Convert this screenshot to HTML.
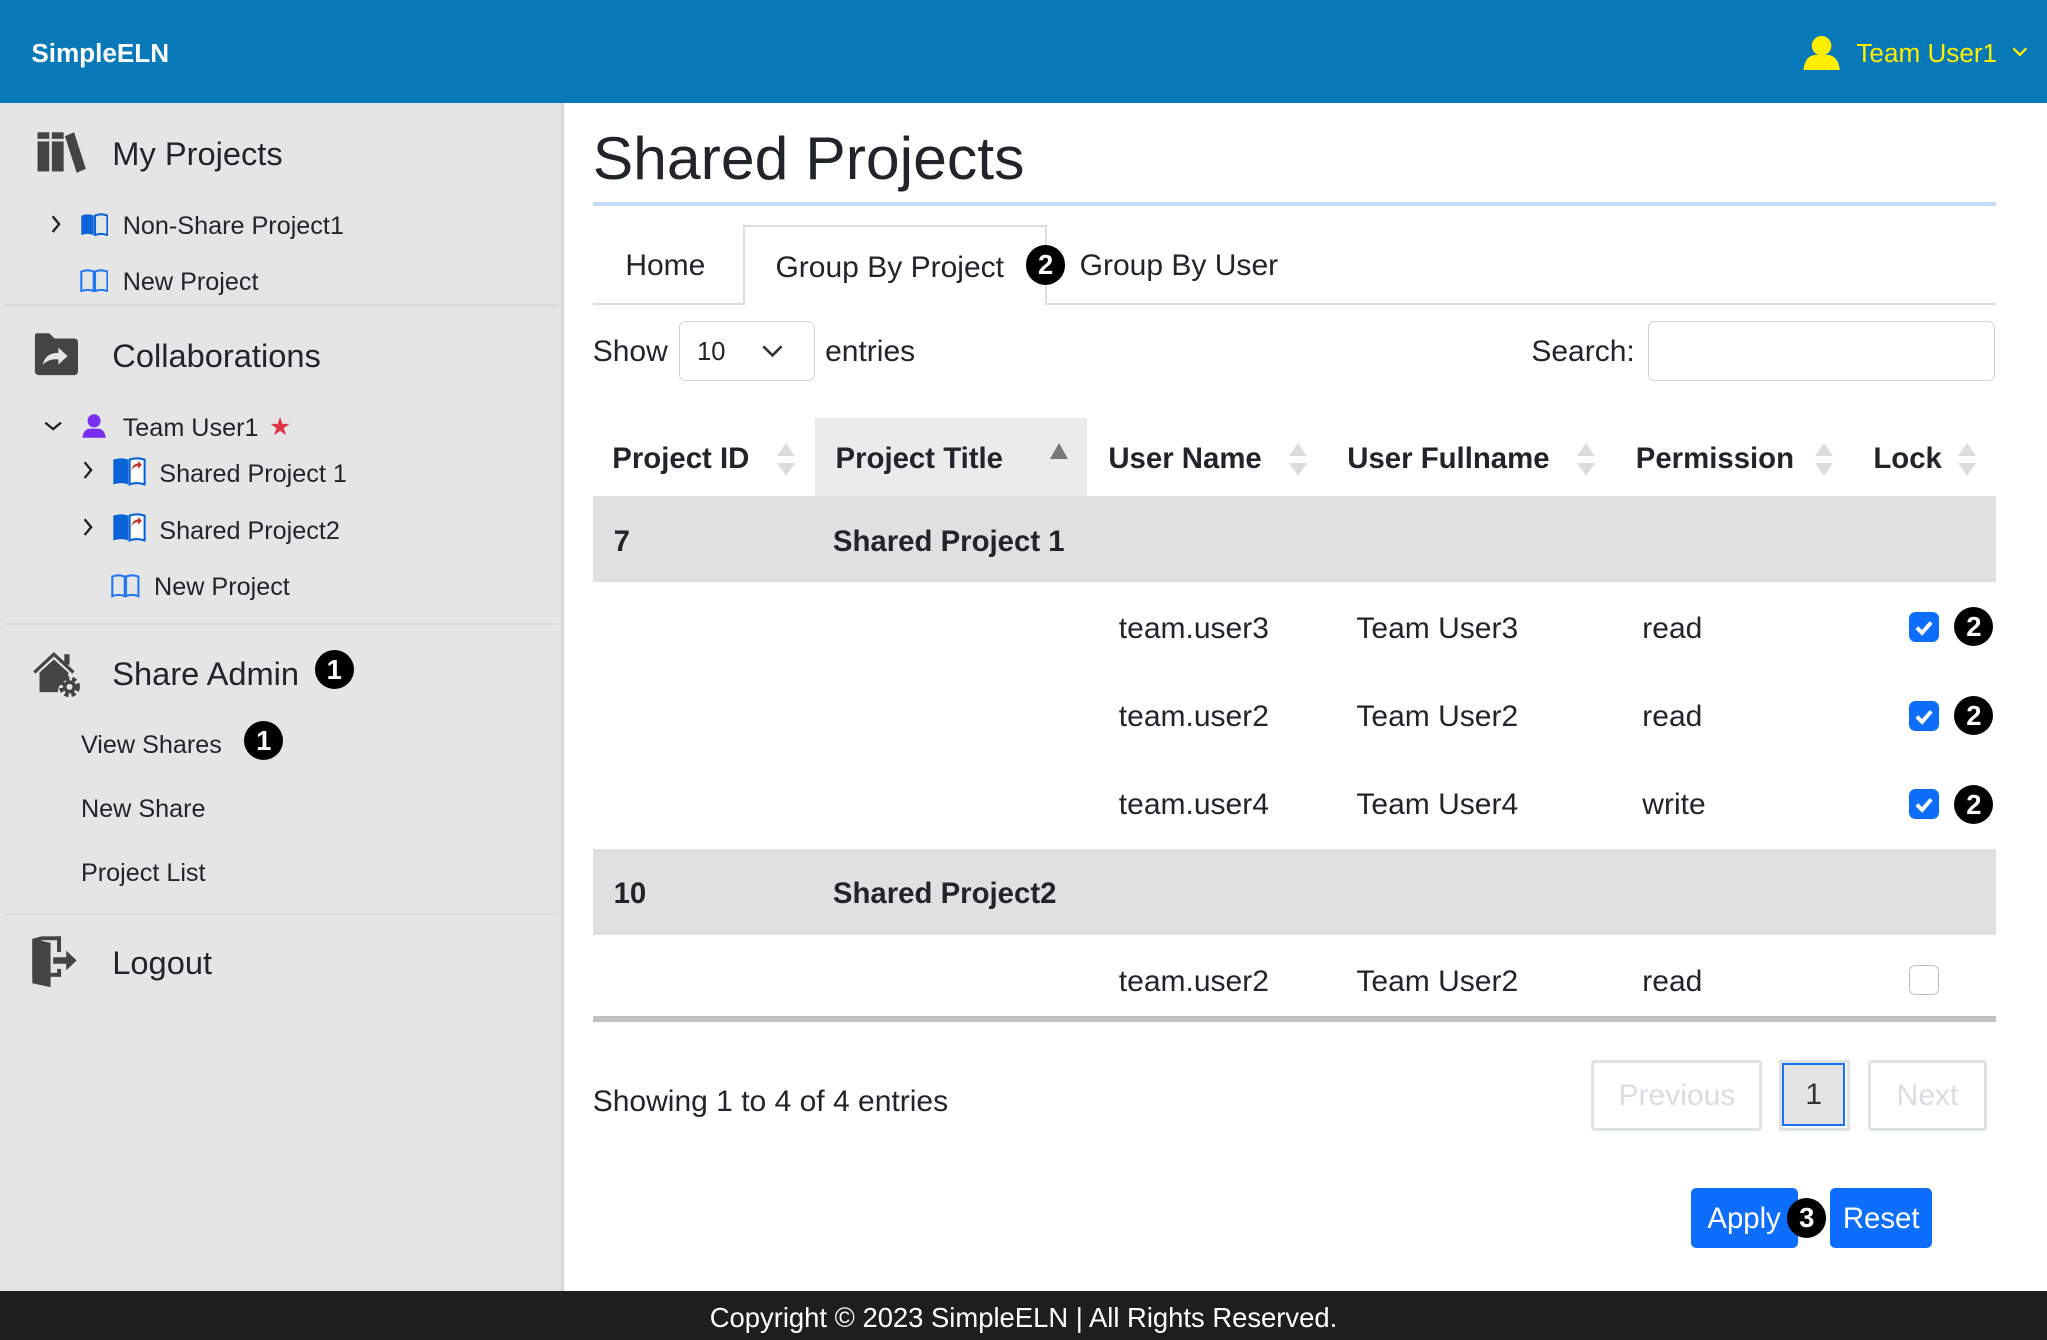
<!DOCTYPE html>
<html><head><meta charset="utf-8">
<style>
html,body{margin:0;padding:0;width:2047px;height:1340px;overflow:hidden;background:#fff}
.z{zoom:1.30548;width:1568px;height:1027px;position:relative;font-family:"Liberation Sans",sans-serif;color:#212529}
.a{position:absolute;white-space:nowrap;line-height:40px;height:40px;margin-top:1px}
.b{font-weight:bold}
.m{font-size:23px}
.h{font-size:22.5px;font-weight:bold}
.s{font-size:19.3px}
.badge{position:absolute;width:30px;height:30px;border-radius:50%;background:#000;color:#fff;font-weight:bold;font-size:21px;line-height:30px;text-align:center}
.cb{position:absolute;width:23px;height:23px;border-radius:5px;background:#0d6efd}
.sort{position:absolute;width:0;height:0;border-left:7px solid transparent;border-right:7px solid transparent}
</style></head><body><div class="z">
<!-- header -->
<div style="position:absolute;left:0;top:0;width:1568px;height:79px;background:#0779b8"></div>
<div class="a b" style="left:24px;top:20px;color:#fff;font-size:20px">SimpleELN</div>
<svg style="position:absolute;left:1380px;top:26px" width="30" height="28" viewBox="0 0 30 28"><circle cx="15" cy="9" r="7.5" fill="#ffee00"/><path d="M1 28 Q2 17 10 16 L20 16 Q28 17 29 28Z" fill="#ffee00"/></svg>
<div class="a" style="left:1422px;top:20px;color:#ffee00;font-size:20px">Team User1</div>
<svg style="position:absolute;left:1541px;top:36px" width="12" height="8"><path d="M1 1 L6 6 L11 1" stroke="#ffee00" stroke-width="1.8" fill="none"/></svg>

<!-- sidebar -->
<div style="position:absolute;left:0;top:79px;width:430px;height:910px;background:#e5e5e5;border-right:3px solid #d6d6d6"></div>
<svg style="position:absolute;left:24px;top:100px" width="42" height="34" viewBox="0 0 42 34"><rect x="5" y="1" width="9" height="30" fill="#444"/><rect x="16" y="1" width="9" height="30" fill="#444"/><rect x="5" y="6" width="9" height="2" fill="#e5e5e5"/><rect x="16" y="6" width="9" height="2" fill="#e5e5e5"/><path d="M26 4 L33 1 L42 29 L35 32Z" fill="#444"/></svg>
<div class="a" style="left:86px;top:97px;font-size:25px">My Projects</div>
<svg style="position:absolute;left:38px;top:165px" width="9" height="14"><path d="M2 1 L7 7 L2 13" stroke="#222" stroke-width="1.8" fill="none"/></svg>
<svg style="position:absolute;left:61px;top:163px" width="22" height="18" viewBox="0 0 22 18"><path d="M1 2 Q6 0 10.5 2 L10.5 17 Q6 15 1 17Z" fill="#0a64d8"/><path d="M11.5 2 Q16 0 21 2 L21 17 Q16 15 11.5 17Z" fill="none" stroke="#0a64d8" stroke-width="1.6"/></svg>
<div class="a s" style="left:94px;top:152px">Non-Share Project1</div>
<svg style="position:absolute;left:61px;top:206px" width="22" height="18" viewBox="0 0 22 18"><path d="M1 2 Q6 0 10.5 2 L10.5 17 Q6 15 1 17Z M11.5 2 Q16 0 21 2 L21 17 Q16 15 11.5 17Z" fill="none" stroke="#1f78f0" stroke-width="1.6"/></svg>
<div class="a s" style="left:94px;top:195px">New Project</div>
<div style="position:absolute;left:2px;top:233px;width:426px;height:2px;background:#dcdcdc"></div>
<svg style="position:absolute;left:24px;top:254px" width="38" height="34" viewBox="0 0 38 34"><path d="M3 3 Q3 1 5 1 L14 1 L18 5 L33 5 Q36 5 36 8 L36 30 Q36 33 33 33 L6 33 Q3 33 3 30Z" fill="#444"/><path d="M9 25 Q11 16 21 16 L21 12 L28 18.5 L21 25 L21 21 Q14 20 9 25Z" fill="#e5e5e5"/></svg>
<div class="a" style="left:86px;top:252px;font-size:25px">Collaborations</div>
<svg style="position:absolute;left:34px;top:322px" width="14" height="9"><path d="M1 2 L7 7 L13 2" stroke="#222" stroke-width="1.8" fill="none"/></svg>
<svg style="position:absolute;left:62px;top:316px" width="20" height="20" viewBox="0 0 20 20"><circle cx="10" cy="6" r="5" fill="#7a2ff0"/><path d="M1 19 Q2 12 7 12 L13 12 Q18 12 19 19Z" fill="#7a2ff0"/></svg>
<div class="a s" style="left:94px;top:307px">Team User1</div>
<div class="a" style="left:206px;top:307px;font-size:19px;color:#dc3545">★</div>
<svg style="position:absolute;left:63px;top:353px" width="9" height="14"><path d="M2 1 L7 7 L2 13" stroke="#222" stroke-width="1.8" fill="none"/></svg>
<svg style="position:absolute;left:86px;top:350px" width="26" height="22" viewBox="0 0 26 22"><path d="M1 2 Q7 0 12.5 2 L12.5 21 Q7 19 1 21Z" fill="#0a64d8"/><path d="M13.5 2 Q19 0 25 2 L25 21 Q19 19 13.5 21Z" fill="#fff" stroke="#0a64d8" stroke-width="1.6"/><path d="M15 10 Q16 5 20 5 L20 3 L23 6 L20 9 L20 7 Q17 7 15 10Z" fill="#c0392b"/></svg>
<div class="a s" style="left:122px;top:342px">Shared Project 1</div>
<svg style="position:absolute;left:63px;top:397px" width="9" height="14"><path d="M2 1 L7 7 L2 13" stroke="#222" stroke-width="1.8" fill="none"/></svg>
<svg style="position:absolute;left:86px;top:393px" width="26" height="22" viewBox="0 0 26 22"><path d="M1 2 Q7 0 12.5 2 L12.5 21 Q7 19 1 21Z" fill="#0a64d8"/><path d="M13.5 2 Q19 0 25 2 L25 21 Q19 19 13.5 21Z" fill="#fff" stroke="#0a64d8" stroke-width="1.6"/><path d="M15 10 Q16 5 20 5 L20 3 L23 6 L20 9 L20 7 Q17 7 15 10Z" fill="#c0392b"/></svg>
<div class="a s" style="left:122px;top:386px">Shared Project2</div>
<svg style="position:absolute;left:85px;top:440px" width="22" height="18" viewBox="0 0 22 18"><path d="M1 2 Q6 0 10.5 2 L10.5 17 Q6 15 1 17Z M11.5 2 Q16 0 21 2 L21 17 Q16 15 11.5 17Z" fill="none" stroke="#1f78f0" stroke-width="1.6"/></svg>
<div class="a s" style="left:118px;top:429px">New Project</div>
<div style="position:absolute;left:2px;top:477px;width:426px;height:2px;background:#dcdcdc"></div>
<svg style="position:absolute;left:25px;top:497px" width="38" height="38" viewBox="0 0 38 38"><path d="M1 18 L16 4 L31 18" stroke="#444" stroke-width="2.5" fill="none"/><rect x="24" y="4" width="4" height="8" fill="#444"/><path d="M5 18 L16 8 L27 18 L27 24 Q20 24 19 33 L5 33Z" fill="#444"/><circle cx="28" cy="29" r="6" fill="none" stroke="#444" stroke-width="4" stroke-dasharray="3 2"/><circle cx="28" cy="29" r="5" fill="#444"/><circle cx="28" cy="29" r="2.3" fill="#e5e5e5"/></svg>
<div class="a" style="left:86px;top:495px;font-size:25px">Share Admin</div>
<div class="badge" style="left:241px;top:498px">1</div>
<div class="a s" style="left:62px;top:550px">View Shares</div>
<div class="badge" style="left:187px;top:552px">1</div>
<div class="a s" style="left:62px;top:599px">New Share</div>
<div class="a s" style="left:62px;top:648px">Project List</div>
<div style="position:absolute;left:2px;top:699px;width:426px;height:2px;background:#dcdcdc"></div>
<svg style="position:absolute;left:24px;top:716px" width="38" height="40" viewBox="0 0 38 40"><path d="M8 1 L8 32 L1 32 L1 3Z" fill="#444"/><path d="M1 3 L15 6 L15 40 L1 37Z" fill="#444"/><rect x="8" y="1" width="15" height="3" fill="#444"/><rect x="20" y="1" width="3" height="12" fill="#444"/><rect x="20" y="26" width="3" height="6" fill="#444"/><rect x="15" y="29" width="8" height="3" fill="#444"/><path d="M17 17 L27 17 L27 12 L35 19.5 L27 27 L27 22 L17 22Z" fill="#444"/></svg>
<div class="a" style="left:86px;top:717px;font-size:25px">Logout</div>

<!-- main -->
<div class="a" style="left:454px;top:95px;font-size:46.5px;height:52px;line-height:52px">Shared Projects</div>
<div style="position:absolute;left:454px;top:155px;width:1075px;height:3px;background:#c4dcf7"></div>
<div style="position:absolute;left:454px;top:232px;width:1075px;height:2px;background:#ddd"></div>
<div style="position:absolute;left:569px;top:172px;width:233px;height:62px;border:2px solid #ddd;border-bottom:none;background:#fff;box-sizing:border-box"></div>
<div class="a m" style="left:479px;top:183px">Home</div>
<div class="a m" style="left:594px;top:184px">Group By Project</div>
<div class="badge" style="left:786px;top:188px">2</div>
<div class="a m" style="left:827px;top:183px">Group By User</div>

<div class="a m" style="left:454px;top:249px">Show</div>
<div style="position:absolute;left:520px;top:246px;width:104px;height:46px;border:1px solid #ced4da;border-radius:5px;box-sizing:border-box"></div>
<div class="a" style="left:534px;top:249px;font-size:19.5px">10</div>
<svg style="position:absolute;left:584px;top:264px" width="16" height="10"><path d="M1 1 L8 8 L15 1" stroke="#333" stroke-width="2" fill="none"/></svg>
<div class="a m" style="left:632px;top:249px">entries</div>
<div class="a m" style="left:1173px;top:249px">Search:</div>
<div style="position:absolute;left:1262px;top:246px;width:266px;height:46px;border:1px solid #ced4da;border-radius:5px;box-sizing:border-box"></div>

<!-- table header -->
<div style="position:absolute;left:624px;top:320px;width:209px;height:60px;background:#ebebeb"></div>
<div class="a h" style="left:469px;top:331px">Project ID</div>
<div class="sort" style="left:595px;top:339px;border-bottom:10px solid #ddd"></div><div class="sort" style="left:595px;top:355px;border-top:10px solid #ddd"></div>
<div class="a h" style="left:640px;top:331px">Project Title</div>
<div class="sort" style="left:804px;top:339px;border-bottom:13px solid #777"></div>
<div class="a h" style="left:849px;top:331px">User Name</div>
<div class="sort" style="left:987px;top:339px;border-bottom:10px solid #ddd"></div><div class="sort" style="left:987px;top:355px;border-top:10px solid #ddd"></div>
<div class="a h" style="left:1032px;top:331px">User Fullname</div>
<div class="sort" style="left:1208px;top:339px;border-bottom:10px solid #ddd"></div><div class="sort" style="left:1208px;top:355px;border-top:10px solid #ddd"></div>
<div class="a h" style="left:1253px;top:331px">Permission</div>
<div class="sort" style="left:1390px;top:339px;border-bottom:10px solid #ddd"></div><div class="sort" style="left:1390px;top:355px;border-top:10px solid #ddd"></div>
<div class="a h" style="left:1435px;top:331px">Lock</div>
<div class="sort" style="left:1500px;top:339px;border-bottom:10px solid #ddd"></div><div class="sort" style="left:1500px;top:355px;border-top:10px solid #ddd"></div>

<!-- group 1 -->
<div style="position:absolute;left:454px;top:380px;width:1075px;height:66px;background:#e0e0e0"></div>
<div class="a h" style="left:470px;top:394px">7</div>
<div class="a h" style="left:638px;top:394px">Shared Project 1</div>

<div class="a m" style="left:857px;top:461px">team.user3</div>
<div class="a m" style="left:1039px;top:461px">Team User3</div>
<div class="a m" style="left:1258px;top:461px">read</div>
<div class="a m" style="left:857px;top:528px">team.user2</div>
<div class="a m" style="left:1039px;top:528px">Team User2</div>
<div class="a m" style="left:1258px;top:528px">read</div>
<div class="a m" style="left:857px;top:596px">team.user4</div>
<div class="a m" style="left:1039px;top:596px">Team User4</div>
<div class="a m" style="left:1258px;top:596px">write</div>

<div class="cb" style="left:1462px;top:469px"><svg width="23" height="23"><path d="M6 12 L10 16 L17 8" stroke="#fff" stroke-width="3" fill="none"/></svg></div>
<div class="badge" style="left:1497px;top:465px">2</div>
<div class="cb" style="left:1462px;top:537px"><svg width="23" height="23"><path d="M6 12 L10 16 L17 8" stroke="#fff" stroke-width="3" fill="none"/></svg></div>
<div class="badge" style="left:1497px;top:533px">2</div>
<div class="cb" style="left:1462px;top:604px"><svg width="23" height="23"><path d="M6 12 L10 16 L17 8" stroke="#fff" stroke-width="3" fill="none"/></svg></div>
<div class="badge" style="left:1497px;top:601px">2</div>

<!-- group 2 -->
<div style="position:absolute;left:454px;top:650px;width:1075px;height:66px;background:#e0e0e0"></div>
<div class="a h" style="left:470px;top:664px">10</div>
<div class="a h" style="left:638px;top:664px">Shared Project2</div>
<div class="a m" style="left:857px;top:731px">team.user2</div>
<div class="a m" style="left:1039px;top:731px">Team User2</div>
<div class="a m" style="left:1258px;top:731px">read</div>
<div style="position:absolute;left:1462px;top:739px;width:23px;height:23px;border:1.5px solid #bbb;border-radius:5px;box-sizing:border-box"></div>
<div style="position:absolute;left:454px;top:778px;width:1075px;height:5px;background:#c1c1c1"></div>

<div class="a m" style="left:454px;top:823px">Showing 1 to 4 of 4 entries</div>
<div style="position:absolute;left:1219px;top:812px;width:131px;height:54px;border:3px solid #dee2e6;border-radius:3px;box-sizing:border-box;color:#dadde0;font-size:23px;text-align:center;line-height:50px">Previous</div>
<div style="position:absolute;left:1363px;top:812px;width:54px;height:54px;border:3px solid #dee2e6;box-sizing:border-box"><div style="width:48px;height:48px;border:2px solid #1a73f5;box-sizing:border-box;background:#e4e4e4;font-size:23px;text-align:center;line-height:46px;color:#333">1</div></div>
<div style="position:absolute;left:1431px;top:812px;width:91px;height:54px;border:3px solid #dee2e6;border-radius:3px;box-sizing:border-box;color:#dadde0;font-size:23px;text-align:center;line-height:50px">Next</div>

<div style="position:absolute;left:1295px;top:910px;width:82px;height:46px;background:#0d6efd;border-radius:4px;color:#fff;font-size:22.5px;line-height:48px;text-align:center">Apply</div>
<div class="badge" style="left:1369px;top:918px">3</div>
<div style="position:absolute;left:1402px;top:910px;width:78px;height:46px;background:#0d6efd;border-radius:4px;color:#fff;font-size:22.5px;line-height:48px;text-align:center">Reset</div>

<!-- footer -->
<div style="position:absolute;left:0;top:989px;width:1568px;height:38px;background:#1e1e1e;color:#fff;font-size:21px;line-height:41px;text-align:center">Copyright © 2023 SimpleELN | All Rights Reserved.</div>
</div></body></html>
